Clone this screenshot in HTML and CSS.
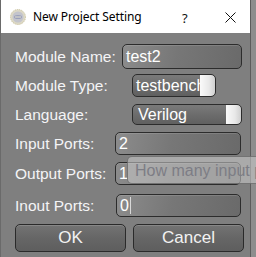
FILE: index.html
```html
<!DOCTYPE html>
<html>
<head>
<meta charset="utf-8">
<link rel="stylesheet" href="styles.css">
</head>
<body>
<div class="window">
  <div class="titlebar">
    <svg class="app-icon" width="16" height="16" viewBox="0 0 16 16">
      <circle cx="8" cy="8" r="7.5" fill="#dcd8c6" stroke="#cbc39f" stroke-width="1" stroke-dasharray="1.2 0.8"/>
      <circle cx="8" cy="8" r="5.5" fill="#c3c4cc"/>
      <ellipse cx="8" cy="8" rx="4" ry="2" fill="#9aa0bb"/>
      <rect x="5" y="7.5" width="6" height="1" fill="#e6e2d0"/>
    </svg>
    <span class="title">New Project Setting</span>
    <span class="help">?</span>
    <svg class="close" width="11" height="11" viewBox="0 0 11 11">
      <path d="M0.5 0.5 L10.5 10.5 M10.5 0.5 L0.5 10.5" stroke="#111" stroke-width="1"/>
    </svg>
  </div>
  <div class="content">
    <div class="row r-name">
      <span class="label">Module Name:</span>
      <div class="field f-name">test2</div>
    </div>
    <div class="row r-type">
      <span class="label">Module Type:</span>
      <div class="combo c-type"><span class="combo-text">testbench</span><span class="combo-btn"></span></div>
    </div>
    <div class="row r-lang">
      <span class="label">Language:</span>
      <div class="combo c-lang"><span class="combo-text">Verilog</span><span class="combo-btn"></span></div>
    </div>
    <div class="row r-in">
      <span class="label">Input Ports:</span>
      <div class="field f-port">2</div>
    </div>
    <div class="row r-out">
      <span class="label">Output Ports:</span>
      <div class="field f-port">1</div>
    </div>
    <div class="row r-inout">
      <span class="label">Inout Ports:</span>
      <div class="field f-port f-inout">0<span class="caret"></span></div>
    </div>
    <div class="buttons">
      <div class="btn">OK</div>
      <div class="btn">Cancel</div>
    </div>
  </div>
</div>
<div class="tooltip">How many input ports</div>
</body>
</html>
```
FILE: styles.css
```css
html, body {
  margin: 0;
  padding: 0;
}
body {
  width: 256px;
  height: 257px;
  background: #8d8d8d;
  overflow: hidden;
  position: relative;
  font-family: "Liberation Sans", Arial, sans-serif;
}
.window {
  width: 249px;
  height: 257px;
  border-left: 1px solid #6a6a6a;
  border-right: 1px solid #5c5c5c;
  background: #7f7f7f;
}
.titlebar {
  height: 33px;
  background: #ffffff;
  display: flex;
  align-items: center;
  position: relative;
}
.app-icon {
  margin-left: 9px;
  margin-top: 1px;
}
.title {
  margin-left: 7px;
  font-size: 12px;
  color: #000;
  font-family: "Noto Sans", "Liberation Sans", sans-serif;
  letter-spacing: -0.1px;
}
.help {
  position: absolute;
  left: 181px;
  top: 9px;
  font-size: 13px;
  font-family: "Noto Sans", sans-serif;
  color: #111;
}
.close {
  position: absolute;
  left: 224px;
  top: 12px;
}
.content {
  padding: 11px 0 0 14px;
  display: flex;
  flex-direction: column;
}
.row {
  display: flex;
  align-items: center;
  position: relative;
}
.label {
  width: 100px;
  color: #f4f4f6;
  font-size: 15.5px;
  white-space: nowrap;
}
.field, .combo {
  box-sizing: border-box;
  border: 1px solid #2c2c2c;
  border-radius: 5px;
  color: #ffffff;
  font-size: 16px;
  display: flex;
  align-items: center;
}
.field {
  background: linear-gradient(100deg, #8c8c8c 0%, #777 45%, #6a6a6a 100%);
  box-shadow: inset 0 1px 0 rgba(255,255,255,0.12);
  padding-left: 3px;
}
.r-name .field { margin-left: 7px; width: 120px; height: 25px; }
.r-type { margin-top: 5px; }
.r-lang { margin-top: 7px; }
.r-in { margin-top: 7px; }
.r-out { margin-top: 7px; }
.r-inout { margin-top: 9px; }
.f-port { width: 126px; height: 23px; }
.f-inout { margin-left: 1px; width: 125px; }
.caret {
  display: inline-block;
  width: 1px;
  height: 17px;
  background: #d8d8d8;
  margin-left: 1px;
}
.combo {
  overflow: hidden;
  background: linear-gradient(180deg, #7a7a7a 0%, #6a6a6a 60%, #606060 100%);
}
.combo-text {
  flex: 1;
  min-width: 0;
  padding-left: 3px;
  white-space: nowrap;
  overflow: hidden;
}
.combo-btn {
  align-self: stretch;
  width: 15px;
  flex: none;
  background: linear-gradient(90deg, #fafafa 0%, #e8e8e8 60%, #cfcfcf 100%);
  border-top-right-radius: 4px;
  border-bottom-right-radius: 4px;
}
.c-type { margin-left: 17px; width: 84px; height: 23px; }
.c-lang { margin-left: 17px; width: 110px; height: 21px; }
.c-lang .combo-text { padding-left: 5px; }
.buttons {
  margin-top: 7px;
  display: flex;
  gap: 7px;
}
.btn {
  box-sizing: border-box;
  width: 111px;
  height: 28px;
  border: 1px solid #2a2a2a;
  border-radius: 5px;
  background: linear-gradient(180deg, #737373 0%, #666 50%, #5e5e5e 100%);
  box-shadow: inset 0 1px 0 rgba(255,255,255,0.15);
  color: #f2f2f2;
  font-size: 17px;
  display: flex;
  align-items: center;
  justify-content: center;
}
.tooltip {
  position: absolute;
  left: 127px;
  top: 156px;
  width: 140px;
  height: 28px;
  box-sizing: border-box;
  border: 1px solid rgba(70,70,70,0.55);
  border-radius: 5px;
  background: rgba(205,205,205,0.55);
  color: #7d7d85;
  font-size: 16px;
  padding: 5px 0 0 7px;
  white-space: nowrap;
  overflow: hidden;
}
```
